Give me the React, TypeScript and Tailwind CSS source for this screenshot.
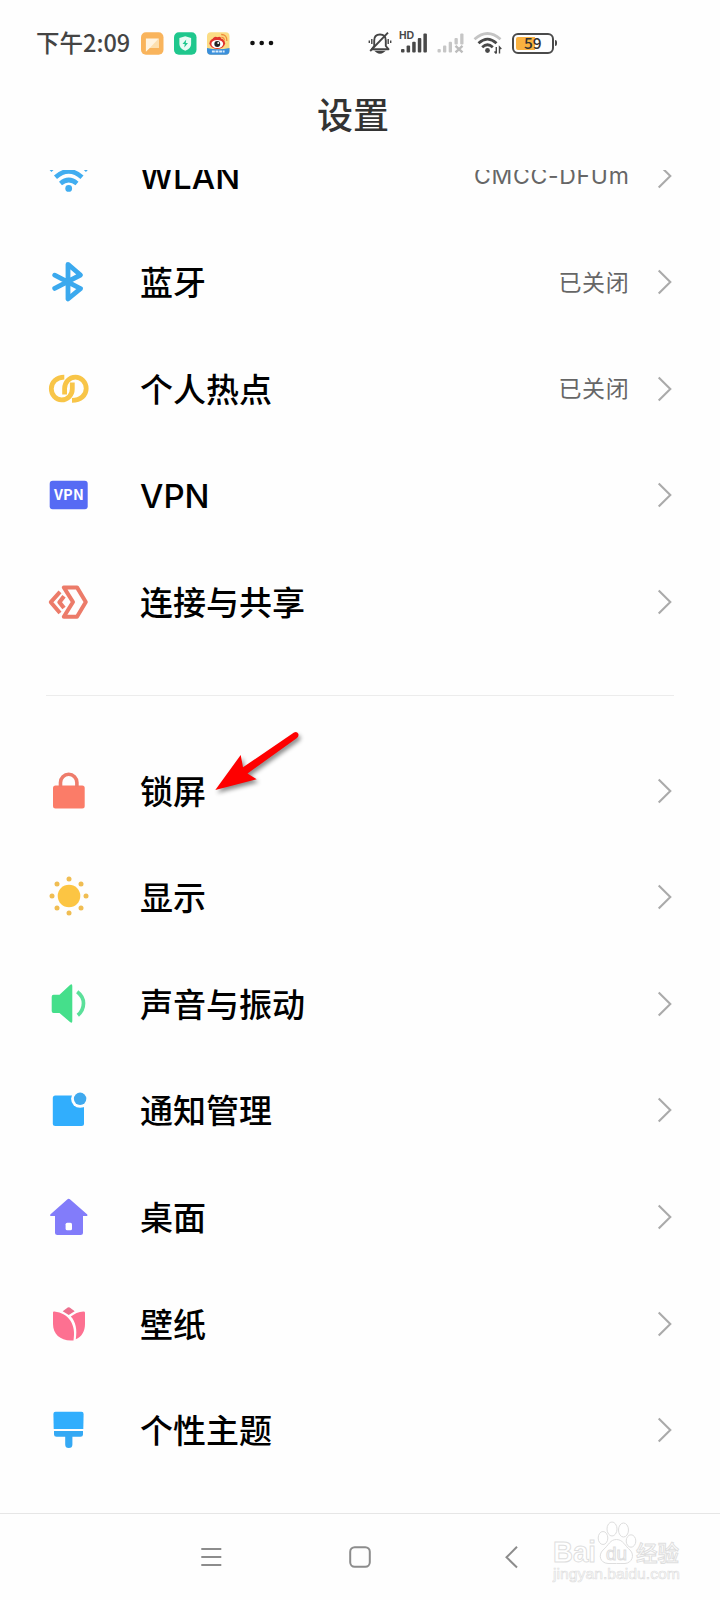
import type { ReactNode } from "react";

interface SettingItem {
  label: string;
  icon: ReactNode;
  value?: string;
  pointed?: boolean;
}

const networkItems: SettingItem[] = [
  {
    label: "WLAN",
    value: "CMCC-DFUm",
    icon: (
      <g fill="none" stroke="#41adf0" strokeWidth="4.2">
        <path d="M6 18.4 Q24.5 0 43.4 18.4" />
        <path d="M11.5 25.2 Q24.7 13.5 38 25.2" strokeWidth="4.6" />
        <path d="M16.5 31.5 Q24.7 24.5 33 31.5" strokeWidth="4.6" />
        <circle cx="24.7" cy="36.4" r="3.4" fill="#41adf0" stroke="none" />
      </g>
    ),
  },
  {
    label: "蓝牙",
    value: "已关闭",
    icon: (
      <path
        d="M10.7 17.2 L36.5 30.6 L24 41 V6.3 L36.5 17 L10.7 30.4"
        fill="none"
        stroke="#3ba9ee"
        strokeWidth="4.8"
        strokeLinecap="round"
        strokeLinejoin="round"
      />
    ),
  },
  {
    label: "个人热点",
    value: "已关闭",
    icon: (
      <g fill="none" stroke="#f8c548" strokeWidth="4.8">
        <path d="M20.3 12.1 C12.5 12.1 7.3 17.5 7.3 23.8 C7.3 30 12 34.9 17.5 34.9 C24 34.9 28.3 29.5 28.3 24 V17.5" />
        <path d="M28 35.4 C36.8 35.4 42.2 30 42.2 23.5 C42.2 17 37 12.1 31.5 12.1 C25 12.1 20.6 17.5 20.6 23.5 V29.5" />
      </g>
    ),
  },
  {
    label: "VPN",
    icon: (
      <>
        <rect x="5.7" y="9.7" width="38" height="28.6" rx="3" fill="#566bf4" />
        <text
          x="24.9"
          y="29.3"
          textAnchor="middle"
          textLength="30"
          className="fill-white font-['Noto_Sans_CJK_SC',sans-serif] text-[14.5px] font-bold"
        >
          VPN
        </text>
      </>
    ),
  },
  {
    label: "连接与共享",
    icon: (
      <g fill="none" stroke="#ec7b69" strokeWidth="4" strokeLinejoin="round">
        <path d="M19.8 9.4 H33 L41.8 24 L33 38.7 H19.8 L29 24 Z" />
        <path d="M16 13.8 L6.8 24.2 L16 35" />
        <path d="M20 18.3 L15.4 24.2 L20 30" strokeWidth="4.2" />
      </g>
    ),
  },
];

const deviceItems: SettingItem[] = [
  {
    label: "锁屏",
    pointed: true,
    icon: (
      <>
        <rect x="9" y="18.5" width="31.7" height="23" rx="2.5" fill="#fb7c68" />
        <path
          d="M16.5 20 V15.5 a8.2 8.2 0 0 1 16.4 0 V20"
          fill="none"
          stroke="#ee7c6b"
          strokeWidth="3.6"
        />
      </>
    ),
  },
  {
    label: "显示",
    icon: (
      <g fill="#fcc543">
        <circle cx="25" cy="23" r="11.3" />
        <g fill="#f0bd52">
          <circle cx="25" cy="6" r="2.5" />
          <circle cx="25" cy="40" r="2.5" />
          <circle cx="8" cy="23" r="2.5" />
          <circle cx="42" cy="23" r="2.5" />
          <circle cx="13" cy="11" r="2.5" />
          <circle cx="37" cy="11" r="2.5" />
          <circle cx="13" cy="35" r="2.5" />
          <circle cx="37" cy="35" r="2.5" />
        </g>
      </g>
    ),
  },
  {
    label: "声音与振动",
    icon: (
      <>
        <path
          d="M9.5 14.7 H15.5 L26 5 Q28.3 3.2 28.3 6 V41 Q28.3 43.8 26 42 L15.5 33 H9.5 Q7.7 33 7.7 31 V16.7 Q7.7 14.7 9.5 14.7 Z"
          fill="#45df8b"
        />
        <path d="M33.2 11.7 Q39.5 16.5 39.5 23.3 Q39.5 30.5 33.8 35.2" fill="none" stroke="#5be09a" strokeWidth="3.7" />
      </>
    ),
  },
  {
    label: "通知管理",
    icon: (
      <>
        <rect x="8.8" y="9.5" width="31.2" height="30.5" rx="2.5" fill="#31aefd" />
        <circle cx="36.1" cy="12.8" r="9" fill="#fefefe" />
        <circle cx="36.1" cy="12.8" r="6.2" fill="#3fa9ee" />
      </>
    ),
  },
  {
    label: "桌面",
    icon: (
      <>
        <path
          d="M23.2 6.4 Q24.7 5.2 26.2 6.4 L43.3 21.5 Q44 23 42.5 23 H39 V39.5 Q39 42 36.5 42 H13.5 Q11 42 11 39.5 V23 H7 Q5.5 23 6.3 21.5 Z"
          fill="#827cfa"
        />
        <rect x="21.6" y="29.7" width="6.4" height="7.6" rx="1.6" fill="#fff" />
      </>
    ),
  },
  {
    label: "壁纸",
    icon: (
      <g fill="#fd7091">
        <path d="M9 12.5 Q9 11.3 10.3 11.5 C25 13 32.5 25 29.5 40.4 C17 41.5 9 34.5 9 24 Z" />
        <path d="M26.8 16.6 Q32 12 39.5 11.4 Q41 11.4 41 12.8 V24 C41 31.5 37.5 37 31.8 39.2 C33.3 29.5 31.8 22 26.8 16.6 Z" />
        <path d="M18.7 11.2 L23.7 7.6 Q24.7 7 25.7 7.6 L30.7 11.2 L24.7 15 Z" fill="#ec6f8d" />
      </g>
    ),
  },
  {
    label: "个性主题",
    icon: (
      <g fill="#31aefd">
        <path d="M11.5 5.7 H37.5 Q39.6 5.7 39.6 8 L39.3 23 H9.7 L9.4 8 Q9.4 5.7 11.5 5.7 Z" />
        <path d="M10 25.1 H39 V28.5 Q39 30.8 36.5 30.8 H28.4 V38.5 a3.6 3.6 0 0 1 -7.2 0 V30.8 H12.5 Q10 30.8 10 28.5 Z" fill="#35a9f4" />
      </g>
    ),
  },
];

function StatusBar() {
  return (
    <header className="flex h-[86px] items-center pl-[36px] text-[#444]">
      <span className="w-[105px] text-[23.5px] leading-none font-medium whitespace-nowrap">下午2:09</span>
      <div className="flex items-center gap-[10.5px]">
        <svg width="22.5" height="23" viewBox="0 0 23 23">
          <rect width="23" height="23" rx="5" fill="#f9b45c" />
          <path d="M5 6.5 H18 V16 H9 L5 20 Z" fill="#fff4e1" />
          <path d="M18 6.5 V16 H9 Z" fill="#fddfae" />
        </svg>
        <svg width="22.5" height="23" viewBox="0 0 23 23">
          <rect width="23" height="23" rx="5" fill="#1fc78d" />
          <path d="M11.5 4 L17.5 6 V12 Q17.5 16.5 11.5 19 Q5.5 16.5 5.5 12 V6 Z" fill="#e9fbf4" />
          <path d="M12.5 7.5 L8.7 12 H11 L10.5 15.5 L14.3 11 H12 Z" fill="#1fc78d" />
        </svg>
        <svg width="22.5" height="23" viewBox="0 0 23 23">
          <rect width="23" height="23" rx="4" fill="#fbdc84" />
          <path d="M0 16 Q11 19 23 16 V19 Q23 23 19 23 H4 Q0 23 0 19 Z" fill="#3a8fdc" />
          <ellipse cx="10.5" cy="11.3" rx="8" ry="5.8" fill="#e0332c" />
          <path d="M4.5 9 Q7 3.5 10.5 5 Q14.5 3.5 14.5 7" fill="#e0332c" />
          <ellipse cx="10.5" cy="12" rx="6" ry="4.2" fill="#fff" />
          <circle cx="10.5" cy="12" r="3" fill="#222" />
          <circle cx="11.5" cy="11" r="1" fill="#fff" />
          <path d="M14.5 2.3 Q20.5 2.3 20.3 9 M14.7 5.2 Q17.8 5.2 17.7 8.5" fill="none" stroke="#f08a3c" strokeWidth="1.3" />
          <path d="M5 19.6 H18" stroke="#d8ecfb" strokeWidth="2" strokeDasharray="3 .7" />
        </svg>
      </div>
      <svg className="ml-5" width="24" height="6" viewBox="0 0 24 6" fill="#111">
        <circle cx="2.5" cy="3" r="2.3" />
        <circle cx="11.7" cy="3" r="2.3" />
        <circle cx="21" cy="3" r="2.3" />
      </svg>

      {/* Muted bell, signals, wifi */}
      <svg className="ml-[94px]" width="24" height="24" viewBox="0 0 24 24" fill="none" stroke="#444" strokeWidth="1.9">
        <path d="M3.8 18.2 H20.5 L17.8 15 V9.5 Q17.8 3.5 12 3.5 Q6.2 3.5 6.2 9.5 V15 Z" strokeLinejoin="round" />
        <path d="M9 20.7 Q12 23 15 20.7 Z" fill="#444" />
        <path d="M2.2 20 L20 1.7" strokeWidth="1.9" />
        <path d="M3.8 8 V13 M1.3 9.5 V12 M20.2 8 V13 M22.7 9.5 V12" strokeWidth="1.4" />
      </svg>
      <svg className="ml-[7px] overflow-visible" width="30" height="24" viewBox="0 0 30 24" fill="#484848">
        <text x="0" y="8.3" className="font-['Liberation_Sans',sans-serif] text-[10.5px] font-bold">HD</text>
        <rect x="2" y="18" width="3.5" height="3.5" rx="1" />
        <rect x="7.6" y="14.5" width="3.5" height="7" rx="1" />
        <rect x="13.2" y="10.8" width="3.5" height="10.7" rx="1" />
        <rect x="18.8" y="7" width="3.5" height="14.5" rx="1" />
        <rect x="24.4" y="2.5" width="3.5" height="19" rx="1" />
      </svg>
      <svg className="ml-[7px]" width="30" height="24" viewBox="0 0 30 24" fill="#c6c6c6">
        <rect x="1.5" y="18" width="3.3" height="3.5" rx="1" />
        <rect x="7" y="14.5" width="3.3" height="7" rx="1" />
        <rect x="12.7" y="10.8" width="3.3" height="10.7" rx="1" />
        <rect x="18.5" y="7" width="3.3" height="6.5" rx="1" />
        <rect x="24.2" y="2.5" width="3.3" height="11" rx="1" />
        <path d="M19.5 14.8 L26.5 21.3 M26.5 14.8 L19.5 21.3" stroke="#bdbdbd" strokeWidth="2.4" />
      </svg>
      <svg className="ml-[7px]" width="30" height="24" viewBox="0 0 30 24" fill="none" stroke="#484848" strokeWidth="2.8">
        <path d="M1.5 8.3 Q14.5 -3.2 27.5 8.3" stroke="#c4c4c4" />
        <path d="M5.5 12.2 Q14.5 4 23.5 12.2" />
        <path d="M9.2 16.2 Q14.5 11.3 19.8 16.2" />
        <circle cx="14.5" cy="19.5" r="2.4" fill="#484848" stroke="none" />
        <path d="M23.3 16 V22.5 M21.5 20.5 L23.3 22.5 M26.5 22.5 V16 L28.3 18" strokeWidth="1.4" />
      </svg>
      <div className="ml-[9.5px] flex items-center">
        <div className="flex h-[21px] w-[42px] items-center rounded-[6px] border-[2.5px] border-[#4a4a4a] p-[2px]">
          <div className="flex h-full w-[19px] items-center rounded-l-[2px] bg-[#fab13f] pl-[8px] text-[15.5px] leading-none font-medium text-[#333]">
            59
          </div>
        </div>
        <div className="ml-px h-[6px] w-[2px] rounded-r bg-[#4a4a4a]" />
      </div>
    </header>
  );
}

function PointerArrow() {
  return (
    <svg
      className="pointer-events-none absolute top-[-12px] left-[206px] drop-shadow-[2px_3px_2px_rgba(0,0,0,0.45)]"
      width="100"
      height="76"
      viewBox="0 0 100 76"
      fill="#fe0000"
    >
      <path d="M9.3 65 L34.7 30 L37 42.3 L88 7.5 Q91 6.3 92.3 8.7 Q93.2 11.2 91 13 L41.5 48.5 L50.7 54.3 Z" />
    </svg>
  );
}

function SettingRow({ item }: { item: SettingItem }) {
  return (
    <li className="relative flex h-[106.6px] shrink-0 items-center pr-[48px] pl-[44px]">
      <svg width="48" height="48" viewBox="0 0 48 48" className="shrink-0">
        {item.icon}
      </svg>
      <span className="ml-12 pt-[3px] font-[Inter,'Noto_Sans_CJK_SC',sans-serif] text-[33px] leading-none font-medium text-black">
        {item.label}
      </span>
      {item.value && (
        <span className="ml-auto pt-[2px] font-[Inter,'Noto_Sans_CJK_SC',sans-serif] text-[23px] leading-none tracking-[0.7px] text-[#666]">
          {item.value}
        </span>
      )}
      <svg
        className={item.value ? "ml-[27.5px]" : "ml-auto"}
        width="15"
        height="26"
        viewBox="0 0 15 26"
        fill="none"
        stroke="#aaa"
        strokeWidth="2.1"
      >
        <path d="M1.7 1.5 L13.3 13 L1.7 24.5" />
      </svg>
      {item.pointed && <PointerArrow />}
    </li>
  );
}

function NavBar() {
  return (
    <nav className="flex h-[87px] shrink-0 items-center border-t border-[#e6e6e6] pl-[200px]">
      <svg width="22" height="24" viewBox="0 0 22 24" stroke="#8c8c8c" strokeWidth="2">
        <path d="M1.3 4 H21.3 M1.3 12 H21.3 M1.3 20 H21.3" />
      </svg>
      <svg className="ml-[126px]" width="24" height="24" viewBox="0 0 24 24" fill="none" stroke="#8c8c8c" strokeWidth="2">
        <rect x="2.2" y="2.2" width="19.6" height="19.6" rx="4.5" />
      </svg>
      <svg className="ml-[132px]" width="16" height="24" viewBox="0 0 16 24" fill="none" stroke="#8c8c8c" strokeWidth="2">
        <path d="M13 1.8 L2.5 12.3 L13 22.5" />
      </svg>
    </nav>
  );
}

function Watermark() {
  return (
    <svg
      className="absolute right-[34px] bottom-0 font-['Liberation_Sans','Noto_Sans_CJK_SC',sans-serif]"
      width="134"
      height="80"
      viewBox="0 0 134 80"
      fill="#fff"
      stroke="#dedede"
      strokeWidth="1"
    >
      <text x="1" y="42" textLength="43" lengthAdjust="spacingAndGlyphs" className="text-[29px] font-bold">Bai</text>
      <ellipse cx="51" cy="18" rx="4.8" ry="6.5" />
      <ellipse cx="60" cy="9" rx="5" ry="7" />
      <ellipse cx="71.5" cy="10" rx="5" ry="7" />
      <ellipse cx="79" cy="21" rx="4.8" ry="6.2" />
      <path d="M64.5 19.5 C71 19.5 73 26 78 30 C83 35 80 43 73 43.5 C68 43.5 61 43.5 56 43.5 C48 43 46 35 51 30 C57 25 58 19.5 64.5 19.5 Z" />
      <text x="54" y="40" textLength="21" lengthAdjust="spacingAndGlyphs" className="text-[19px]">du</text>
      <text x="84" y="40.5" textLength="43" className="text-[21.5px] font-medium">经验</text>
      <text
        x="1"
        y="59"
        textLength="127"
        lengthAdjust="spacingAndGlyphs"
        fill="#fdfdfd"
        strokeWidth="0.6"
        className="text-[15px]"
      >
        jingyan.baidu.com
      </text>
    </svg>
  );
}

export default function App() {
  return (
    <div className="relative flex h-[1600px] w-[720px] flex-col overflow-hidden bg-[#fefefe] font-['Noto_Sans_CJK_SC',sans-serif]">
      <StatusBar />
      <h1 className="mb-[30px] flex h-[54px] items-center justify-center pr-[14px] text-[36px] leading-none font-medium text-[#333]">
        设置
      </h1>

      <main className="flex-1 overflow-hidden">
        <ul className="-mt-[47.7px]">
          {networkItems.map((item) => (
            <SettingRow key={item.label} item={item} />
          ))}
        </ul>
        <hr className="mx-[46px] mt-[40px] mb-[41px] border-[#ececec]" />
        <ul>
          {deviceItems.map((item) => (
            <SettingRow key={item.label} item={item} />
          ))}
        </ul>
      </main>

      <NavBar />
      <Watermark />
    </div>
  );
}
